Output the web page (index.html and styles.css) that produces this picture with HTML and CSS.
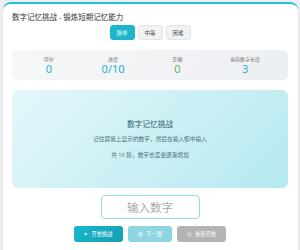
FILE: index.html
```html
<!DOCTYPE html>
<html lang="zh-CN">
<head>
    <meta charset="UTF-8">
    <title>数字记忆挑战</title>
    <link rel="stylesheet" href="styles.css">
</head>
<body>
    <div class="card">
        <h1 class="page_title">数字记忆挑战 - 锻炼短期记忆能力</h1>

        <div class="levels">
            <button class="level_btn active" type="button">简单</button>
            <button class="level_btn" type="button">中等</button>
            <button class="level_btn" type="button">困难</button>
        </div>

        <div class="stats">
            <div class="stat">
                <span class="stat_label">得分</span>
                <span class="stat_value">0</span>
            </div>
            <div class="stat">
                <span class="stat_label">进度</span>
                <span class="stat_value">0/10</span>
            </div>
            <div class="stat">
                <span class="stat_label">正确</span>
                <span class="stat_value green">0</span>
            </div>
            <div class="stat">
                <span class="stat_label">当前数字长度</span>
                <span class="stat_value">3</span>
            </div>
        </div>

        <div class="game_area">
            <h2 class="game_title">数字记忆挑战</h2>
            <p class="game_text">记住屏幕上显示的数字，然后在输入框中输入</p>
            <p class="game_text">共 10 轮，数字长度会逐渐增加</p>
        </div>

        <input class="answer_input" type="text" placeholder="输入数字">

        <div class="controls">
            <button class="ctrl_btn start_btn" type="button">
                <svg width="4" height="4" viewBox="0 0 10 10"><path d="M2 1 L9 5 L2 9 Z" fill="white"/></svg>
                开始挑战
            </button>
            <button class="ctrl_btn next_btn" type="button" disabled>
                <svg width="5" height="5" viewBox="0 0 10 10"><circle cx="5" cy="5" r="4" fill="none" stroke="white" stroke-width="1.3"/><path d="M4 3 L6.5 5 L4 7" fill="none" stroke="white" stroke-width="1.3"/></svg>
                下一题
            </button>
            <button class="ctrl_btn reset_btn" type="button" disabled>
                <svg width="5" height="5" viewBox="0 0 10 10"><path d="M8.5 5 A3.5 3.5 0 1 1 7 2.2" fill="none" stroke="white" stroke-width="1.3"/><path d="M6 0.8 L8.3 2 L6.6 3.8 Z" fill="white"/></svg>
                重新开始
            </button>
        </div>
    </div>
</body>
</html>
```

FILE: styles.css
```css
/* General */
*{
    font-family: "Noto Sans", "Noto Sans CJK SC", sans-serif;
    box-sizing: border-box;
}
html{
    margin: 0px;
    padding: 0px;
}
body{
    margin: 0px;
    padding: 2px 2px 0px 3px;
    background-color: #eef0f3;
}

/* Card */
.card{
    width: 295px;
    min-height: 260px;
    padding: 8px 10px 20px 9px;
    background-color: white;
    border-top: 2px solid #22c3d8;
    border-radius: 8px;
    box-shadow: 0px 2px 6px rgba(0, 0, 0, 0.06);
}
.page_title{
    margin: 0px;
    font-size: 7.5px;
    line-height: 10px;
    font-weight: normal;
    color: #333;
}

/* Levels */
.levels{
    display: flex;
    justify-content: center;
    gap: 3px;
    margin-top: 3px;
}
.level_btn{
    width: 25px;
    height: 15px;
    padding: 0px;
    font-size: 5.5px;
    color: #555;
    background-color: #f1f2f4;
    border: 1px solid #e2e4e7;
    border-radius: 3px;
}
.level_btn.active{
    color: white;
    background-color: #1cb5cc;
    border-color: #1cb5cc;
}

/* Stats */
.stats{
    display: flex;
    justify-content: space-around;
    align-items: center;
    height: 30px;
    margin-top: 10px;
    padding: 0px 4px 0px 8px;
    background: linear-gradient(135deg, #f6f7f9, #eceff2);
    border-radius: 5px;
}
.stat{
    display: flex;
    flex-direction: column;
    align-items: center;
}
.stat_label{
    font-size: 5px;
    line-height: 7px;
    color: #777;
}
.stat_value{
    font-size: 11px;
    line-height: 12px;
    color: #22b4cc;
}
.stat_value.green{
    color: #5cb85c;
}

/* Game area */
.game_area{
    display: flex;
    flex-direction: column;
    justify-content: center;
    align-items: center;
    height: 98px;
    margin-top: 10px;
    background: linear-gradient(135deg, #e4f7fa, #b5e9f0);
    border-radius: 6px;
}
.game_title{
    margin: 0px 0px 6px 0px;
    font-size: 7.7px;
    line-height: 10px;
    font-weight: normal;
    color: #2f5f6b;
}
.game_text{
    margin: 0px;
    font-size: 5.7px;
    line-height: 8px;
    color: #4c6f78;
}
.game_text + .game_text{
    margin-top: 8px;
}

/* Input */
.answer_input{
    display: block;
    width: 99px;
    height: 24px;
    margin: 7px auto 0px auto;
    padding: 0px;
    font-size: 11.5px;
    text-align: center;
    border: 1px solid #8fdce6;
    border-radius: 4px;
    outline: none;
}
.answer_input::placeholder{
    color: #aaa;
}

/* Controls */
.controls{
    display: flex;
    justify-content: center;
    gap: 5px;
    margin-top: 7px;
}
.ctrl_btn{
    display: flex;
    justify-content: center;
    align-items: center;
    gap: 3px;
    height: 16px;
    padding: 0px;
    font-size: 5.3px;
    color: white;
    border: none;
    border-radius: 3px;
}
.start_btn{
    width: 49px;
    background: linear-gradient(135deg, #1bb6cc, #13a0b4);
}
.next_btn{
    width: 44px;
    background-color: #8dd5e1;
}
.reset_btn{
    width: 49px;
    background-color: #b4b4b4;
}
```
